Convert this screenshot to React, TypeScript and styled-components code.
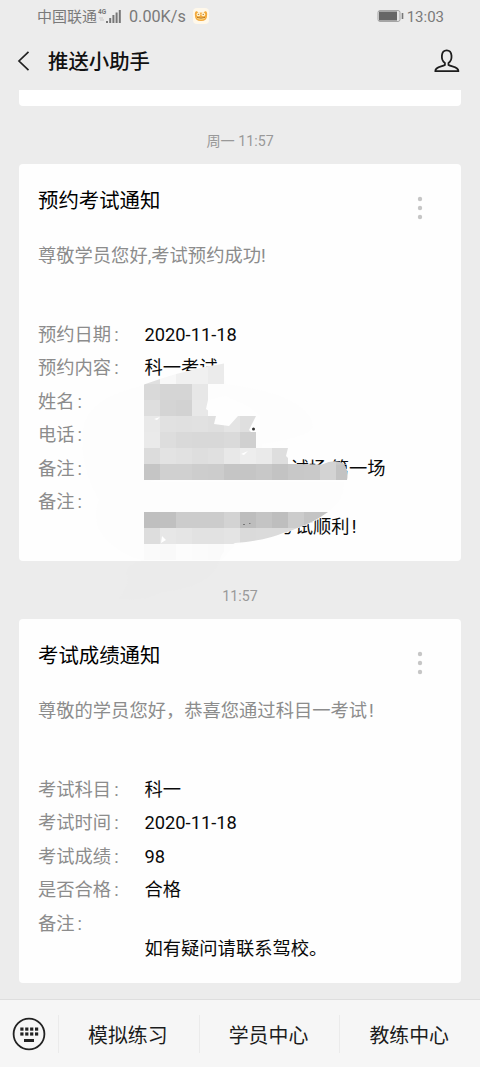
import React from "react";
import styled, { createGlobalStyle } from "styled-components";

const Global = createGlobalStyle`
  * { box-sizing: border-box; }
  body {
    margin: 0;
    background: #ececec;
    font-family: Roboto, "Noto Sans CJK SC", sans-serif;
    color: #111;
  }
`;

const Screen = styled.div`
  width: 480px;
  height: 1067px;
  display: flex;
  flex-direction: column;
  overflow: hidden;
  background: #ececec;
`;

const StatusBar = styled.header`
  flex: none;
  height: 34px;
  padding: 0 36px 0 37px;
  display: flex;
  align-items: center;
  color: #7a7a7a;
  font-size: 15px;
  line-height: 20px;
  white-space: nowrap;
`;

const Signal = styled.svg`
  display: block;
  width: 25px;
  height: 16px;
  margin: 0 7px 2px 0;
`;

const Speed = styled.span`
  font-size: 16.2px;
  width: 64px;
`;

const Emoji = styled.svg`
  display: block;
  width: 16px;
  height: 16px;
  margin-bottom: 2px;
`;

const Battery = styled.svg`
  display: block;
  width: 27px;
  height: 14px;
  margin: 0 3px 2px auto;
`;

const NavBar = styled.nav`
  flex: none;
  height: 56px;
  padding: 0 20px 0 17px;
  display: flex;
  align-items: center;
`;

const NavTitle = styled.h1`
  margin: 0 auto 0 18px;
  font-size: 20.4px;
  line-height: 28px;
  font-weight: 500;
`;

const BackIcon = styled.svg`
  display: block;
  width: 13px;
  height: 22px;
  margin-bottom: 2px;
`;

const PersonIcon = styled.svg`
  display: block;
  width: 26px;
  height: 24px;
  margin-bottom: 2px;
`;

const Feed = styled.main`
  flex: 1;
  min-height: 0;
  padding: 0 19px;
  display: flex;
  flex-direction: column;
`;

const CardTail = styled.div`
  flex: none;
  height: 16px;
  background: #fff;
  border-radius: 0 0 4px 4px;
`;

const Stamp = styled.time`
  flex: none;
  height: 58px;
  padding-top: 11px;
  line-height: 48px;
  text-align: center;
  font-size: 14.2px;
  color: #999;
`;

const Card = styled.article<{ $height: number }>`
  position: relative;
  flex: none;
  height: ${(p) => p.$height}px;
  padding: 20px 19px 0;
  background: #fefefe;
  border-radius: 4px;
`;

const CardHead = styled.div`
  display: flex;
  justify-content: space-between;
  height: 56px;
`;

const CardTitle = styled.h2`
  margin: 0;
  font-size: 20.4px;
  line-height: 34px;
  font-weight: 400;
  color: #000;
`;

const MoreIcon = styled.svg`
  display: block;
  width: 6px;
  height: 24px;
  margin: 12px 19px 0 0;
`;

const Greeting = styled.p`
  margin: 0 0 47px;
  font-size: 18.3px;
  line-height: 32px;
  color: #8c8c8c;
  white-space: nowrap;
`;

const Bang = styled.span`
  margin-left: 2px;
`;

const Row = styled.div`
  display: flex;
  height: 33.4px;
  font-size: 18.3px;
  line-height: 32px;
  white-space: nowrap;
`;

const Label = styled.span`
  width: 106.5px;
  color: #8c8c8c;

  &::after {
    content: ":";
    margin-left: 3px;
  }
`;

const Value = styled.span<{ $indent?: number }>`
  color: #0a0a0a;
  padding-left: ${(p) => p.$indent ?? 0}px;
`;

const Note = styled.div<{ $indent?: number }>`
  margin: -8.4px 0 0 ${(p) => 106.5 + (p.$indent ?? 0)}px;
  font-size: 18.3px;
  line-height: 32px;
  color: #0a0a0a;
  white-space: nowrap;
`;

const MosaicLayer = styled.svg`
  position: absolute;
  left: 0;
  top: 0;
  width: 442px;
  height: 456px;
  pointer-events: none;
`;

const Footer = styled.footer`
  flex: none;
  height: 68px;
  display: flex;
  align-items: center;
  background: #f6f6f6;
  border-top: 1px solid #dedede;
`;

const KeyboardButton = styled.button`
  width: 58px;
  height: 67px;
  padding: 0;
  border: 0;
  background: none;
  display: grid;
  place-items: center;
`;

const Tab = styled.a`
  flex: 1;
  height: 38px;
  padding: 4px 2px 0 0;
  border-left: 1px solid #ebebeb;
  text-align: center;
  font-size: 19.9px;
  line-height: 36px;
  color: #1c1c1c;
`;

const More = () => (
  <MoreIcon viewBox="0 0 6 24" fill="#c6c6c6">
    <circle cx="3" cy="3" r="2.2" />
    <circle cx="3" cy="12" r="2.2" />
    <circle cx="3" cy="21" r="2.2" />
  </MoreIcon>
);

const CELL = 16;

type Strip = { y: number; h: number; tones: string[] };

const upper: Strip[] = [
  { y: 363, h: 21, tones: ["e0", "f8", "f0", "f0", "eb"] },
  { y: 384, h: 16, tones: ["d9", "d5", "d5", "e7", "fd"] },
  { y: 400, h: 16, tones: ["de", "d4", "d2", "e8"] },
  { y: 416, h: 16, tones: ["e9", "e1", "e0", "e1", "df", "e4", "df"] },
  { y: 432, h: 16, tones: ["ea", "dd", "d9", "d8", "d8", "da", "d0"] },
  { y: 448, h: 16, tones: ["dc", "e3", "e1", "de", "e0", "e8", "ed", "ea", "de"] },
  { y: 464, h: 16, tones: ["c5", "d0", "d0", "cd", "cc", "c5", "c5", "c8", "c3", "c8", "c9", "d3", "c3"] },
];

const lower: Strip[] = [
  { y: 512, h: 16, tones: ["bf", "c0", "cc", "cc", "cc", "d3", "bd", "c4", "be", "cc", "c4", "c4"] },
  { y: 528, h: 16, tones: ["dd", "e7", "e5", "e2", "e2", "e4", "da", "db", "db", "db"] },
  { y: 544, h: 16, tones: ["fa", "f9", "fc", "fb", "fa"] },
];

const Cells = ({ strips }: { strips: Strip[] }) => (
  <g shapeRendering="crispEdges">
    {strips.map((s) =>
      s.tones.map((t, i) => (
        <rect
          key={`${s.y}-${i}`}
          x={144 + i * CELL}
          y={s.y}
          width={CELL}
          height={s.h}
          fill={`#${t}${t}${t}`}
        />
      ))
    )}
  </g>
);

const Mosaic = () => (
  <MosaicLayer viewBox="19 164 442 456">
    <defs>
      <clipPath id="upperArea">
        <path d="M144 384.5L160 379L176 374L200 368L224 363.5H300V448H288L286 456L294 464L322 464.5Q334 459 343 463Q349 470 347 480H144Z" />
      </clipPath>
      <clipPath id="lowerArea">
        <path d="M144 512H328Q314 522 300 527Q291 531 283 533Q268 540 235 543Q222 549 220 560H144Z" />
      </clipPath>
    </defs>
    <path
      d="M83 430Q86 400 137 387L160 379L200 368L222 364L226 384Q310 395 313 427Q310 437 262 444L262 448L150 482H344Q345 500 328 512Q316 522 301 527Q284 535 235 545Q220 562 219 561H143Q84 540 99 500Q79 465 83 430Z"
      fill="#fdfdfd"
    />
    <path
      d="M141 561H219Q210 588 161 592Q148 601 119 599Q132 581 126 573Q130 563 141 561Z"
      fill="#ebebeb"
    />
    <g clipPath="url(#upperArea)">
      <Cells strips={upper} />
      <rect x="322" y="458" width="14" height="6.5" fill="#d3d3d3" />
      <rect x="336" y="458" width="14" height="6.5" fill="#c9c9c9" />
    </g>
    <g clipPath="url(#lowerArea)">
      <Cells strips={lower} />
    </g>
    <path d="M208 400L225 396L248 406L260 416H238L229 426L214 424L216 416L206 409Z" fill="#fefefe" />
    <path d="M256 416L249 430L251 432H260V415Z" fill="#fefefe" />
    <path d="M154 419L160 417L157 420Z M241 454L248 451L244 455Z M162 536L166 540L161 543Z" fill="#fff" />
    <circle cx="253.5" cy="429" r="1.5" fill="#333" />
    <path d="M243 524.5h2M249 523.5h1.5" stroke="#777" strokeWidth="1" />
  </MosaicLayer>
);

export default function App() {
  return (
    <>
      <Global />
      <Screen lang="zh-CN">
        <StatusBar>
          <span>中国联通</span>
          <Signal viewBox="0 0 25 16">
            <text x="1" y="6" fontSize="6.5" fontWeight="700" fill="#777">4G</text>
            <path d="M2 10h4M3 12h4" stroke="#c8c8c8" />
            <path d="M10 15v-2M13.2 15v-5M16.4 15V7M19.6 15V4.5M22.8 15V2" stroke="#777" strokeWidth="2" />
          </Signal>
          <Speed>0.00K/s</Speed>
          <Emoji viewBox="0 0 16 16">
            <rect width="16" height="16" rx="4" fill="#fff8ea" />
            <path d="M2 8C1 3 4 2 5.5 5Q8 4.2 10.5 5C12 2 15 3 14 8Q14 13 8 13Q2 13 2 8Z" fill="#f3a93c" />
            <circle cx="5.5" cy="6.4" r="1.9" fill="#fff3d0" />
            <circle cx="10.3" cy="6.4" r="1.9" fill="#fff3d0" />
            <path d="M3.5 9Q8 10.5 12.5 9Q12 11.8 8 11.8Q4 11.8 3.5 9Z" fill="#ffdb86" />
            <path d="M4.8 6.4h1.4M9.6 6.4h1.4M4 9.4Q8 11 12 9.4" stroke="#a5651d" fill="none" strokeWidth=".8" />
          </Emoji>
          <Battery viewBox="0 0 27 14">
            <rect x="1" y="1.5" width="22" height="11" rx="2" fill="#e4e4e4" stroke="#a5a5a5" />
            <rect x="2" y="2.5" width="18" height="9" fill="#666" />
            <path d="M25.5 4v6" stroke="#777" strokeWidth="1.6" />
          </Battery>
          <span>13:03</span>
        </StatusBar>
        <NavBar>
          <BackIcon viewBox="0 0 13 22" fill="none" stroke="#222" strokeWidth="1.7">
            <path d="M11.5 1.8L2 11L11.5 20.2" />
          </BackIcon>
          <NavTitle>推送小助手</NavTitle>
          <PersonIcon viewBox="0 0 26 24" fill="none" stroke="#1d1d1d" strokeWidth="1.8" strokeLinejoin="round">
            <path d="M10.9 13.9C6.6 11.2 6.6 1.4 12.7 1.4S18.8 11.2 14.5 13.9V16C17.5 18 24.4 17.4 24.4 22.2H1.3C1.3 17.4 8 18 10.9 16Z" />
          </PersonIcon>
        </NavBar>
        <Feed>
          <CardTail />
          <Stamp>周一 11:57</Stamp>
          <Card $height={397}>
            <CardHead>
              <CardTitle>预约考试通知</CardTitle>
              <More />
            </CardHead>
            <Greeting>尊敬学员您好,考试预约成功!</Greeting>
            <Row><Label>预约日期</Label><Value>2020-11-18</Value></Row>
            <Row><Label>预约内容</Label><Value>科一考试</Value></Row>
            <Row><Label>姓名</Label></Row>
            <Row><Label>电话</Label></Row>
            <Row><Label>备注</Label><Value $indent={146}>试场,第一场</Value></Row>
            <Row><Label>备注</Label></Row>
            <Note $indent={132}>考试顺利<Bang>!</Bang></Note>
            <Mosaic />
          </Card>
          <Stamp>11:57</Stamp>
          <Card $height={364}>
            <CardHead>
              <CardTitle>考试成绩通知</CardTitle>
              <More />
            </CardHead>
            <Greeting>尊敬的学员您好，恭喜您通过科目一考试<Bang>!</Bang></Greeting>
            <Row><Label>考试科目</Label><Value>科一</Value></Row>
            <Row><Label>考试时间</Label><Value>2020-11-18</Value></Row>
            <Row><Label>考试成绩</Label><Value>98</Value></Row>
            <Row><Label>是否合格</Label><Value>合格</Value></Row>
            <Row><Label>备注</Label></Row>
            <Note>如有疑问请联系驾校。</Note>
          </Card>
        </Feed>
        <Footer>
          <KeyboardButton aria-label="键盘">
            <svg width="34" height="34" viewBox="0 0 34 34" fill="#222">
              <circle cx="17" cy="17" r="15.4" fill="none" stroke="#222" strokeWidth="1.8" />
              {[8.3, 13.2, 18.1, 23].map((x) => (
                <React.Fragment key={x}>
                  <rect x={x} y="10.5" width="3.2" height="3.2" />
                  <rect x={x} y="15.4" width="3.2" height="3.2" />
                </React.Fragment>
              ))}
              <rect x="12" y="22" width="10" height="3" />
            </svg>
          </KeyboardButton>
          <Tab>模拟练习</Tab>
          <Tab>学员中心</Tab>
          <Tab>教练中心</Tab>
        </Footer>
      </Screen>
    </>
  );
}
